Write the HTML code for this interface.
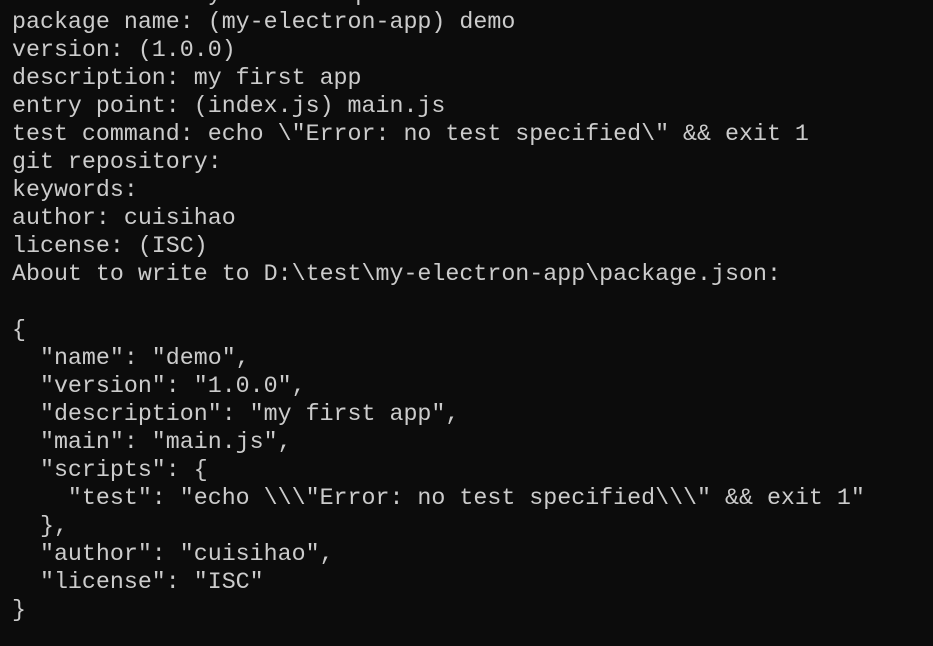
<!DOCTYPE html>
<html><head><meta charset="utf-8"><style>
html,body{margin:0;padding:0;background:#0c0c0c;width:933px;height:646px;overflow:hidden}
pre{position:absolute;left:12px;top:-20px;margin:0;font-family:"Liberation Mono",monospace;font-size:23.3px;line-height:28px;color:#cccccc;white-space:pre}
</style></head><body><pre>Press ^C at any time to quit.
package name: (my-electron-app) demo
version: (1.0.0)
description: my first app
entry point: (index.js) main.js
test command: echo \"Error: no test specified\" &amp;&amp; exit 1
git repository:
keywords:
author: cuisihao
license: (ISC)
About to write to D:\test\my-electron-app\package.json:

{
  "name": "demo",
  "version": "1.0.0",
  "description": "my first app",
  "main": "main.js",
  "scripts": {
    "test": "echo \\\"Error: no test specified\\\" &amp;&amp; exit 1"
  },
  "author": "cuisihao",
  "license": "ISC"
}
</pre></body></html>
